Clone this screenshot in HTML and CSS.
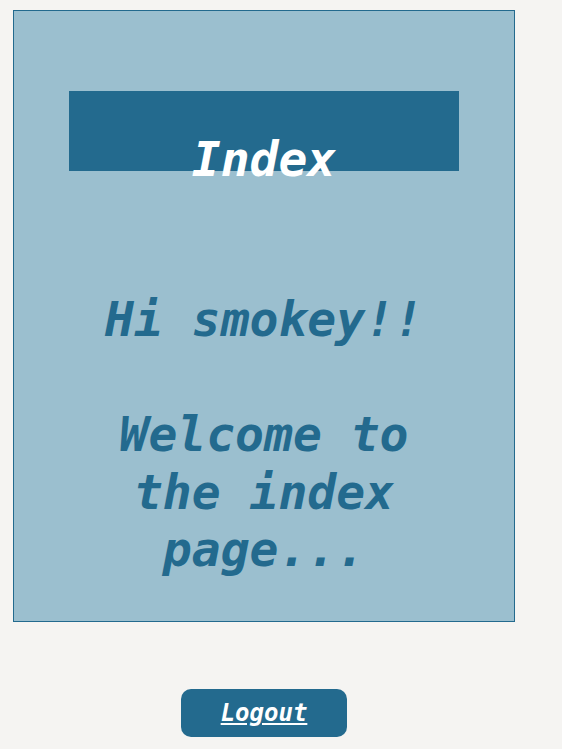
FILE: index.html
```html
<!DOCTYPE html>
<html lang="en">
<head>
  <meta charset="UTF-8">
  <title>Index</title>
  <link rel="stylesheet" href="styles.css">
</head>
<body>

  <div class="page">
    <div class="card">
      <div class="title-bar">
        <h1>Index</h1>
      </div>
      <p class="greeting">Hi smokey!!<br><br>Welcome to the index page...</p>
    </div>

    <button class="button"><a href="#">Logout</a></button>
  </div>

</body>
</html>
```

FILE: styles.css
```css
body {
  margin: 0;
  background: #f5f4f2;
  font-family: "DejaVu Sans Mono", monospace;
  font-weight: bold;
  font-style: italic;
}

.page {
  width: 502px;
  margin: 10px 0 0 13px;
  display: flex;
  flex-direction: column;
  align-items: center;
}

.card {
  box-sizing: border-box;
  width: 502px;
  height: 612px;
  background: #9bbfcf;
  border: 1px solid #236a8e;
  padding: 80px 55px 0;
}

.title-bar {
  height: 80px;
  background: #236a8e;
}

h1 {
  margin: 0;
  padding-top: 40px;
  font-size: 48px;
  line-height: normal;
  text-align: center;
  color: #fff;
}

.greeting {
  margin: 120px 0 0;
  font-size: 48px;
  line-height: 1.2;
  text-align: center;
  color: #236a8e;
}

.button {
  margin-top: 67px;
  width: 166px;
  height: 48px;
  border: none;
  border-radius: 10px;
  background: #236a8e;
  font-family: inherit;
  font-weight: bold;
  font-style: italic;
  font-size: 24px;
  cursor: pointer;
}

.button a {
  color: #fff;
}
```
